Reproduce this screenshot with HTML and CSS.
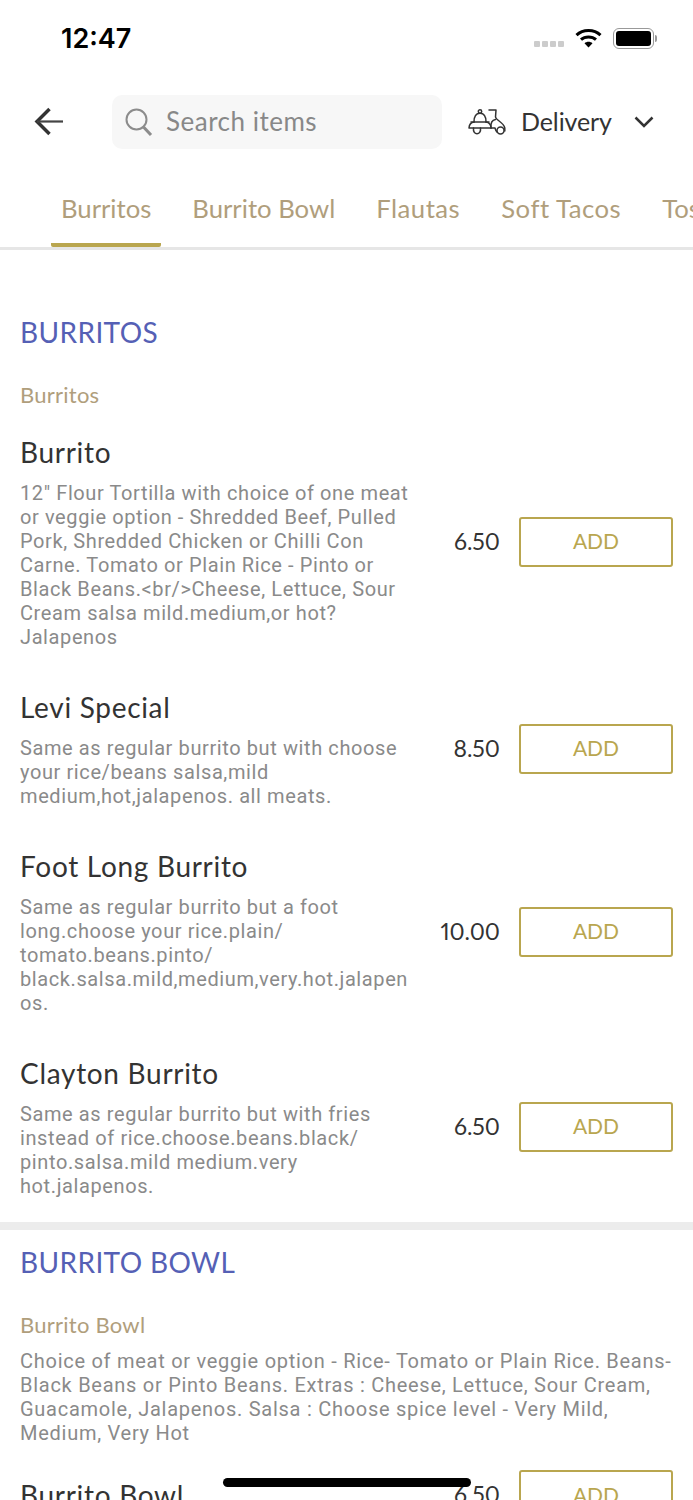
FILE: index.html
```html
<!DOCTYPE html>
<html>
<head>
  <meta charset="utf-8">
  <title>Menu</title>
  <link rel="stylesheet" href="styles.css">
</head>
<body>
  <div class="screen">
    <div class="status">
      <span class="time">12:47</span>
      <div class="status-icons">
        <div class="signal"><i></i><i></i><i></i><i></i></div>
        <svg class="wifi" width="27" height="20" viewBox="0 0 27 20">
          <path d="M1.500 7.200C8 1 19 1 25.500 7.200" fill="none" stroke="#000" stroke-width="3"/>
          <path d="M6 11.600C10 8 17 8 21 11.600" fill="none" stroke="#000" stroke-width="3"/>
          <path d="M9.500 15.200L13.500 19.600L17.500 15.200C15.300 13.200 11.700 13.200 9.500 15.200Z" fill="#000"/>
        </svg>
        <div class="battery"><div class="battery-fill"></div></div>
        <div class="battery-nub"></div>
      </div>
    </div>

    <div class="topbar">
      <svg class="back" width="32" height="30" viewBox="0 0 32 30">
        <path d="M15.500 2L3 14.500L15.500 27" fill="none" stroke="#333" stroke-width="3.500"/>
        <path d="M3 14.500H29" fill="none" stroke="#444" stroke-width="2.200"/>
      </svg>
      <div class="search">
        <svg width="30" height="30" viewBox="0 0 30 30">
          <circle cx="12.500" cy="12.500" r="10" fill="none" stroke="#8c8c8c" stroke-width="2"/>
          <path d="M19.500 20L27 28" fill="none" stroke="#8c8c8c" stroke-width="3"/>
        </svg>
        <span class="search-text">Search items</span>
      </div>
      <div class="mode">
        <svg width="38" height="26" viewBox="0 0 38 26">
          <g fill="none" stroke="#333" stroke-width="1.500" stroke-linecap="round" stroke-linejoin="round">
            <circle cx="12" cy="2.500" r="1.700"/>
            <path d="M6 13C6 7.500 8 4.200 12 4.200C16 4.200 18 7.500 18 13"/>
            <path d="M6 13C3 13.500 1.200 15.500 1 19H23C23 15.500 21 13.500 18 13"/>
            <path d="M3 13H21"/>
            <path d="M5.500 19C5 23 7 24.800 9 24.800C11 24.800 13 23 12.500 19"/>
            <path d="M23 19C22.500 14 24.500 11 27.500 10.500"/>
            <path d="M21 1H28L27.500 8C28 11.500 35.500 13 36.800 19V22"/>
            <path d="M23 19H27C27.500 21 28 22 29 23"/>
            <circle cx="32.500" cy="21.500" r="3.500"/>
          </g>
        </svg>
        <span class="mode-label">Delivery</span>
        <svg class="chevron" width="20" height="12" viewBox="0 0 20 12">
          <path d="M1.500 1.500L10 10L18.500 1.500" fill="none" stroke="#333" stroke-width="2.500"/>
        </svg>
      </div>
    </div>

    <div class="tabs">
      <div class="tab active">Burritos</div>
      <div class="tab">Burrito Bowl</div>
      <div class="tab loose">Flautas</div>
      <div class="tab loose">Soft Tacos</div>
      <div class="tab">Tostadas</div>
    </div>

    <div class="section first">
      <h2>BURRITOS</h2>
      <div class="subcat">Burritos</div>
      <div class="item">
        <div class="info">
          <div class="name">Burrito</div>
          <div class="desc">12" Flour Tortilla with choice of one meat or veggie option - Shredded Beef, Pulled Pork, Shredded Chicken or Chilli Con Carne. Tomato or Plain Rice - Pinto or Black Beans.&lt;br/&gt;Cheese, Lettuce, Sour Cream salsa mild.medium,or hot? Jalapenos</div>
        </div>
        <div class="price">6.50</div>
        <div class="add">ADD</div>
      </div>
      <div class="item">
        <div class="info">
          <div class="name">Levi Special</div>
          <div class="desc">Same as regular burrito but with choose your rice/beans salsa,mild medium,hot,jalapenos. all meats.</div>
        </div>
        <div class="price">8.50</div>
        <div class="add">ADD</div>
      </div>
      <div class="item">
        <div class="info">
          <div class="name">Foot Long Burrito</div>
          <div class="desc">Same as regular burrito but a foot long.choose your rice.plain/<br>tomato.beans.pinto/<br>black.salsa.mild,medium,very.hot.jalapen<br>os.</div>
        </div>
        <div class="price">10.00</div>
        <div class="add">ADD</div>
      </div>
      <div class="item">
        <div class="info">
          <div class="name">Clayton Burrito</div>
          <div class="desc">Same as regular burrito but with fries instead of rice.choose.beans.black/<br>pinto.salsa.mild medium.very<br>hot.jalapenos.</div>
        </div>
        <div class="price">6.50</div>
        <div class="add">ADD</div>
      </div>
    </div>

    <div class="section second">
      <h2>BURRITO BOWL</h2>
      <div class="subcat">Burrito Bowl</div>
      <div class="subdesc">Choice of meat or veggie option - Rice- Tomato or Plain Rice. Beans- Black Beans or Pinto Beans. Extras : Cheese, Lettuce, Sour Cream, Guacamole, Jalapenos. Salsa : Choose spice level - Very Mild, Medium, Very Hot</div>
      <div class="item">
        <div class="info">
          <div class="name">Burrito Bowl</div>
        </div>
        <div class="price">6.50</div>
        <div class="add">ADD</div>
      </div>
    </div>

    <div class="home-bar"></div>
  </div>
</body>
</html>
```

FILE: styles.css
```css
* {
    box-sizing: border-box;
}

html, body {
    margin: 0;
    padding: 0;
    background: #fff;
}

.screen {
    position: relative;
    width: 693px;
    height: 1500px;
    overflow: hidden;
    font-family: Lato, "Open Sans", sans-serif;
    color: #333;
}

/* status bar */
.status {
    height: 76px;
    display: flex;
    justify-content: space-between;
    align-items: center;
    padding: 0 36px 0 61px;
}

.time {
    font-family: Inter, sans-serif;
    font-size: 27px;
    font-weight: 600;
    color: #000;
}

.status-icons {
    display: flex;
    align-items: center;
}

.signal {
    display: flex;
    gap: 2px;
    margin: 12px 11px 0 0;
}

.signal i {
    width: 6px;
    height: 6px;
    border-radius: 1px;
    background: #ccc;
}

.wifi {
    margin-right: 11px;
}

.battery {
    width: 41px;
    height: 21px;
    padding: 2px;
    border: 1.500px solid #999;
    border-radius: 6px;
}

.battery-fill {
    height: 100%;
    border-radius: 3px;
    background: #000;
}

.battery-nub {
    width: 2px;
    height: 7px;
    margin-left: 1px;
    border-radius: 0 2px 2px 0;
    background: #999;
}

/* search row */
.topbar {
    display: flex;
    align-items: center;
    height: 54px;
    margin-top: 19px;
    padding-left: 34px;
}

.back {
    margin-right: 46px;
}

.search {
    display: flex;
    align-items: center;
    gap: 12px;
    width: 330px;
    height: 54px;
    padding-left: 12px;
    border-radius: 10px;
    background: #f7f7f7;
    color: #888;
}

.search-text {
    margin-top: -2px;
    font-size: 26px;
    letter-spacing: 0.5px;
}

.mode {
    display: flex;
    align-items: center;
    margin-left: 26px;
    font-size: 25px;
}

.mode-label {
    margin: -2px 0 0 15px;
    letter-spacing: -0.1px;
}

.chevron {
    margin-left: 22px;
}

/* tabs */
.tabs {
    display: flex;
    height: 77px;
    margin-top: 24px;
    padding-left: 51px;
    gap: 21px;
    overflow: hidden;
    border-bottom: 3px solid #e6e6e6;
}

.tab {
    flex: none;
    height: 74px;
    padding: 20px 10px 0;
    font-size: 25.700px;
    color: #b09e7c;
    border-bottom: 4px solid transparent;
}

.tab.loose {
    letter-spacing: 0.5px;
}

.tab.active {
    border-bottom-color: #b9a64f;
    border-radius: 0 0 2px 2px;
}

/* menu sections */
.section {
    padding: 15px 20px 24px;
    border-bottom: 8px solid #ececec;
}

.section.first {
    padding-top: 65px;
}

h2 {
    margin: 0;
    font-size: 28px;
    line-height: 34px;
    font-weight: 400;
    letter-spacing: 0.4px;
    color: #5560b5;
}

.subcat {
    margin-top: 32px;
    font-size: 22px;
    line-height: 28px;
    letter-spacing: 0.25px;
    color: #b09e7c;
}

.subdesc {
    margin-top: 10px;
    font-family: Roboto, sans-serif;
    font-size: 20px;
    line-height: 24px;
    letter-spacing: 0.73px;
    color: #8a8a8a;
}

.item {
    display: flex;
    align-items: center;
    margin-top: 40px;
}

.subcat + .item {
    margin-top: 25px;
}

.subdesc + .item {
    margin-top: 25px;
}

.info {
    width: 390px;
    flex: none;
}

.name {
    font-size: 28px;
    line-height: 36px;
    letter-spacing: 0.7px;
}

.desc {
    margin-top: 11px;
    font-family: Roboto, sans-serif;
    font-size: 20px;
    line-height: 24px;
    letter-spacing: 0.6px;
    color: #8a8a8a;
}

.price {
    flex: 1;
    padding-bottom: 2px;
    text-align: right;
    margin-right: 19px;
    font-size: 23px;
    font-variant-numeric: proportional-nums;
}

.add {
    flex: none;
    width: 154px;
    height: 50px;
    display: flex;
    align-items: center;
    justify-content: center;
    padding-bottom: 2px;
    border: 2px solid #b9a64f;
    border-radius: 3px;
    font-size: 21px;
    color: #b9a64f;
}

.home-bar {
    position: absolute;
    left: 223px;
    top: 1478px;
    width: 248px;
    height: 9px;
    border-radius: 5px;
    background: #000;
}
```
